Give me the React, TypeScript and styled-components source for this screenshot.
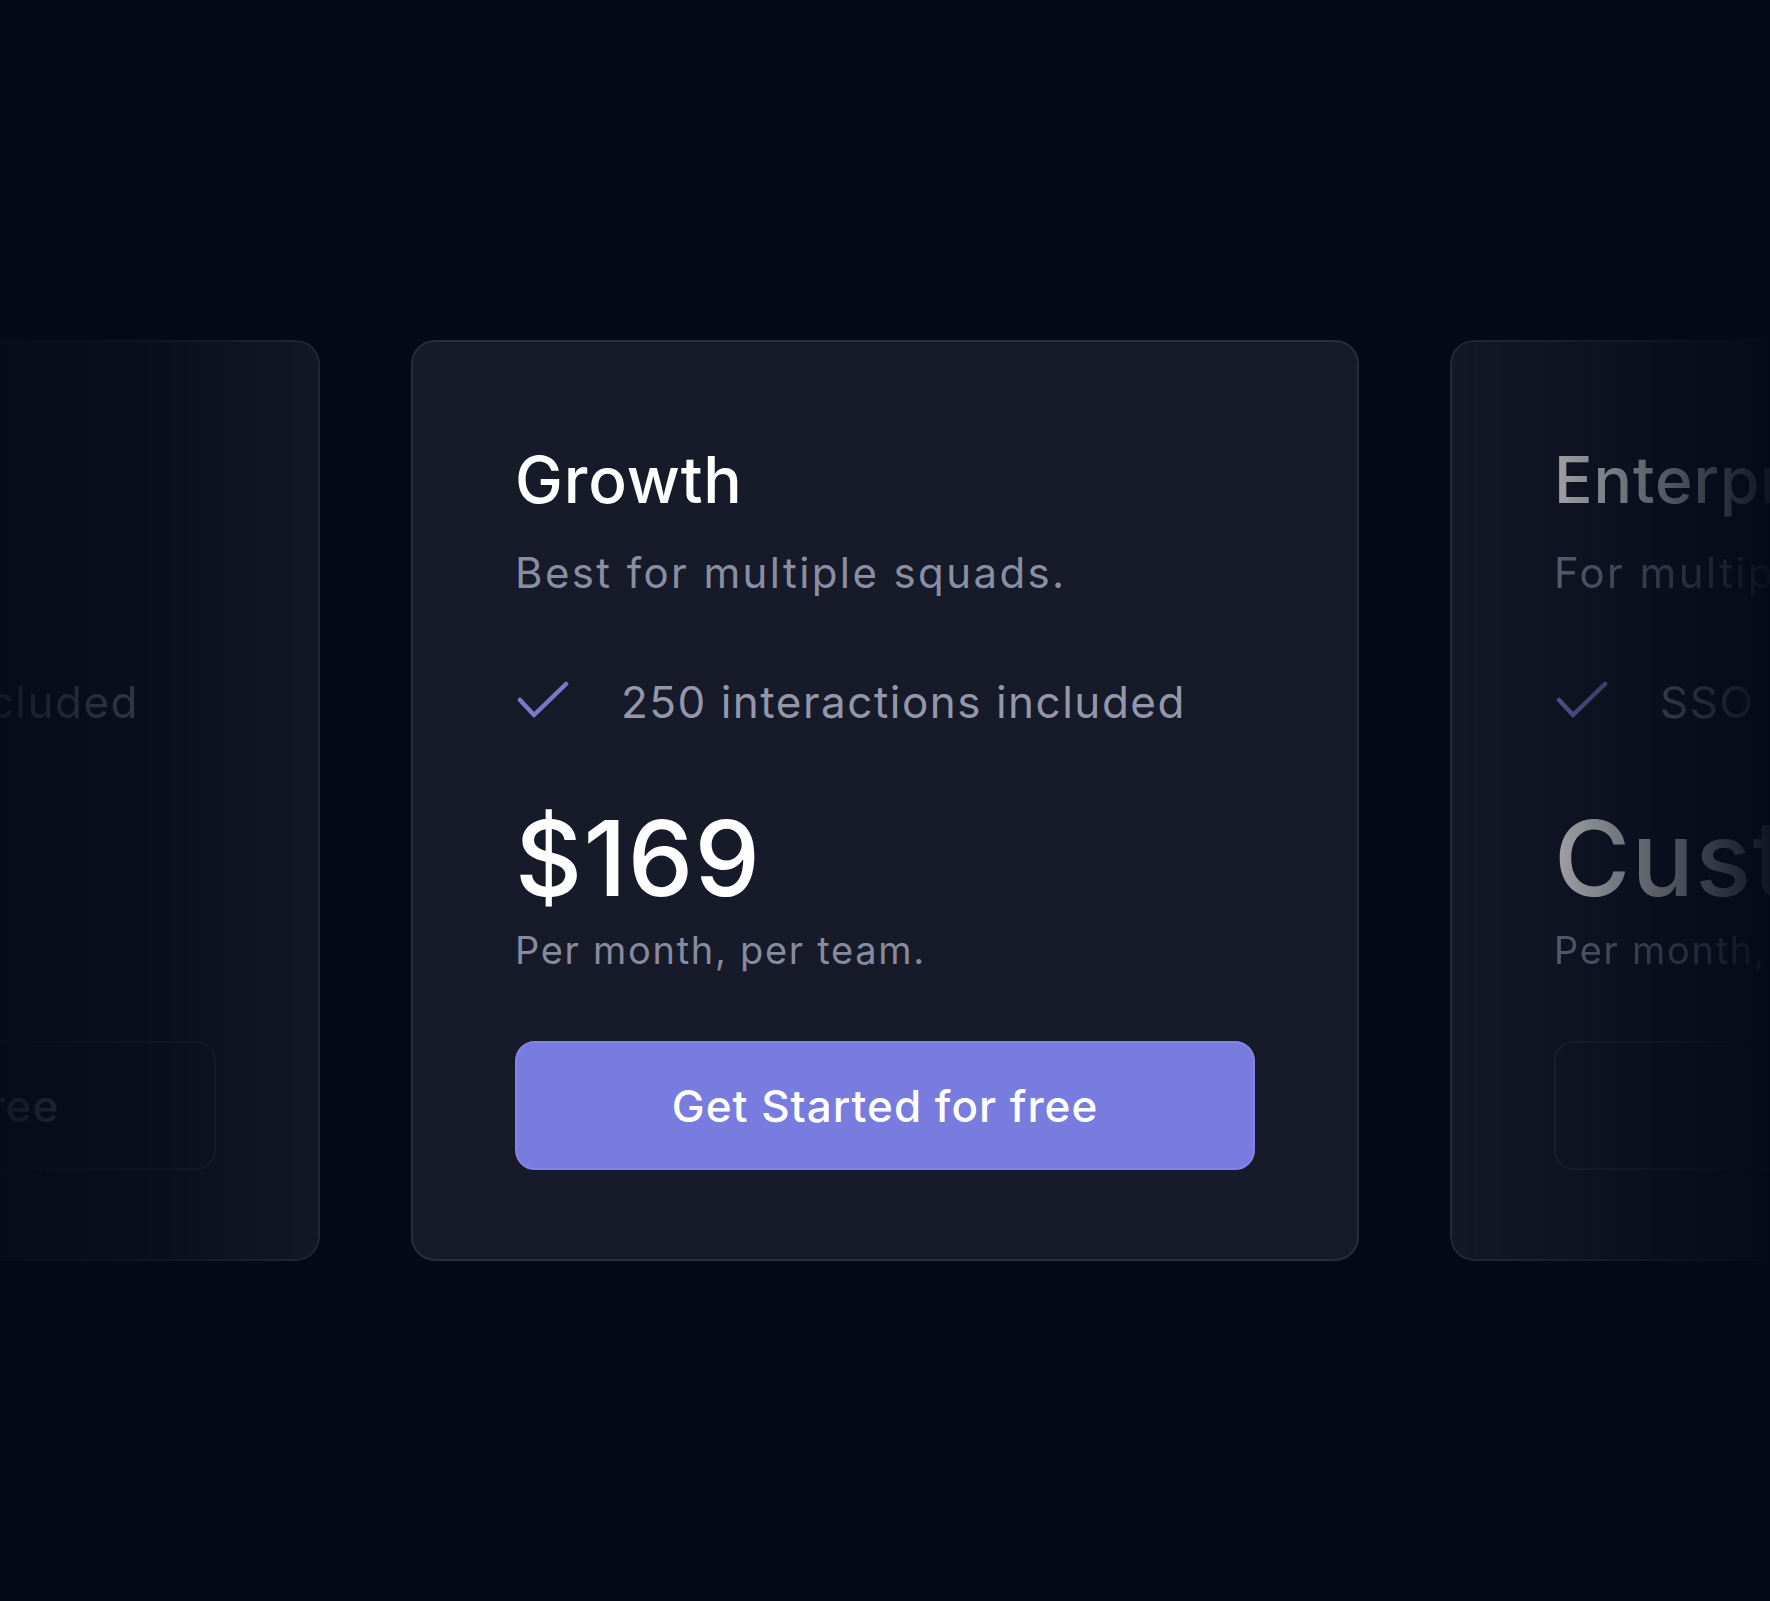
import React from "react";
import styled, { createGlobalStyle, css } from "styled-components";

interface Plan {
    name: string;
    tagline: string;
    feature: string;
    price: string;
    unit: string;
    cta: string;
}

type Side = "left" | "center" | "right";

const plans: { plan: Plan; side: Side }[] = [
    {
        side: "left",
        plan: {
            name: "Starter",
            tagline: "Best for a single squad.",
            feature: "100 interactions included",
            price: "$69",
            unit: "Per month, per team.",
            cta: "Get Started for free",
        },
    },
    {
        side: "center",
        plan: {
            name: "Growth",
            tagline: "Best for multiple squads.",
            feature: "250 interactions included",
            price: "$169",
            unit: "Per month, per team.",
            cta: "Get Started for free",
        },
    },
    {
        side: "right",
        plan: {
            name: "Enterprise",
            tagline: "For multiple departments.",
            feature: "SSO & SAML",
            price: "Custom",
            unit: "Per month, per team.",
            cta: "Contact sales",
        },
    },
];

const GlobalStyle = createGlobalStyle`
    html, body {
        margin: 0;
        padding: 0;
        background: #060a18;
    }
    body {
        font-family: Inter, "Noto Sans", sans-serif;
        -webkit-font-smoothing: antialiased;
    }
`;

const Stage = styled.div`
    width: 1770px;
    height: 1601px;
    display: flex;
    align-items: center;
    justify-content: center;
    overflow: hidden;
    background: #060a18;
`;

const Track = styled.div`
    display: flex;
    gap: 91px;
    flex-shrink: 0;
`;

// side cards fade out towards the screen edges
const fades = {
    left: css`
        -webkit-mask-image: linear-gradient(
            to left,
            rgba(0, 0, 0, 0.85) 0px,
            rgba(0, 0, 0, 0.36) 150px,
            rgba(0, 0, 0, 0) 390px
        );
        mask-image: linear-gradient(
            to left,
            rgba(0, 0, 0, 0.85) 0px,
            rgba(0, 0, 0, 0.36) 150px,
            rgba(0, 0, 0, 0) 390px
        );
    `,
    right: css`
        -webkit-mask-image: linear-gradient(
            to right,
            rgba(0, 0, 0, 0.9) 0px,
            rgba(0, 0, 0, 0.62) 104px,
            rgba(0, 0, 0, 0.12) 290px,
            rgba(0, 0, 0, 0) 340px
        );
        mask-image: linear-gradient(
            to right,
            rgba(0, 0, 0, 0.9) 0px,
            rgba(0, 0, 0, 0.62) 104px,
            rgba(0, 0, 0, 0.12) 290px,
            rgba(0, 0, 0, 0) 340px
        );
    `,
    center: css``,
};

const Card = styled.div<{ $side: Side }>`
    box-sizing: border-box;
    width: 948px;
    height: 921px;
    flex-shrink: 0;
    background: #171a28;
    border: 2px solid #272d3b;
    border-radius: 24px;
    padding: 102px 102px 0 102px;
    display: flex;
    flex-direction: column;
    ${(p) => fades[p.$side]}
`;

const Title = styled.h2`
    margin: 0;
    font-size: 64px;
    line-height: 72px;
    font-weight: 500;
    color: #ffffff;
    letter-spacing: 0.9px;
    white-space: nowrap;
`;

const Tagline = styled.p`
    margin: 29px 0 0;
    font-size: 42px;
    line-height: 56px;
    font-weight: 400;
    color: #8a8ea2;
    letter-spacing: 2.4px;
    white-space: nowrap;
`;

const Feature = styled.div`
    margin-top: 73px;
    display: flex;
    align-items: center;
    gap: 52px;
    height: 56px;
`;

const FeatureText = styled.span`
    font-size: 44px;
    line-height: 56px;
    color: #9497aa;
    letter-spacing: 1.5px;
    white-space: nowrap;
`;

const CheckIcon = styled.svg`
    width: 52px;
    height: 38px;
    flex-shrink: 0;
    margin-left: 2px;
    margin-top: -4px;
`;

const Price = styled.div`
    margin-top: 72px;
    font-size: 104px;
    line-height: 112px;
    font-weight: 500;
    color: #ffffff;
    letter-spacing: 1.2px;
    white-space: nowrap;
`;

const Unit = styled.div`
    margin-top: 12px;
    font-size: 38px;
    line-height: 48px;
    color: #878b9f;
    letter-spacing: 1.7px;
    white-space: nowrap;
`;

const CtaButton = styled.button<{ $primary: boolean }>`
    margin-top: 67px;
    box-sizing: border-box;
    width: 100%;
    height: 129px;
    border-radius: 20px;
    font-family: Inter, "Noto Sans", sans-serif;
    font-size: 44px;
    font-weight: 500;
    letter-spacing: 1px;
    white-space: nowrap;
    cursor: pointer;
    ${(p) =>
        p.$primary
            ? css`
                  background: #797cdf;
                  border: 2px solid #8285e4;
                  color: #ffffff;
              `
            : css`
                  background: transparent;
                  border: 2px solid #262b3a;
                  color: #8a8ea2;
              `}
`;

const Check = () => (
    <CheckIcon viewBox="0 0 52 38" fill="none">
        <polyline
            points="3,19 17,34 49,3"
            stroke="#7b77c9"
            strokeWidth="4.5"
            strokeLinecap="round"
            strokeLinejoin="round"
        />
    </CheckIcon>
);

const PlanCard = ({ plan, side }: { plan: Plan; side: Side }) => (
    <Card $side={side}>
        <Title>{plan.name}</Title>
        <Tagline>{plan.tagline}</Tagline>
        <Feature>
            <Check />
            <FeatureText>{plan.feature}</FeatureText>
        </Feature>
        <Price>{plan.price}</Price>
        <Unit>{plan.unit}</Unit>
        <CtaButton $primary={side === "center"}>{plan.cta}</CtaButton>
    </Card>
);

const App = () => {
    return (
        <>
            <GlobalStyle />
            <Stage>
                <Track>
                    {plans.map(({ plan, side }) => (
                        <PlanCard key={plan.name} plan={plan} side={side} />
                    ))}
                </Track>
            </Stage>
        </>
    );
};

export default App;
